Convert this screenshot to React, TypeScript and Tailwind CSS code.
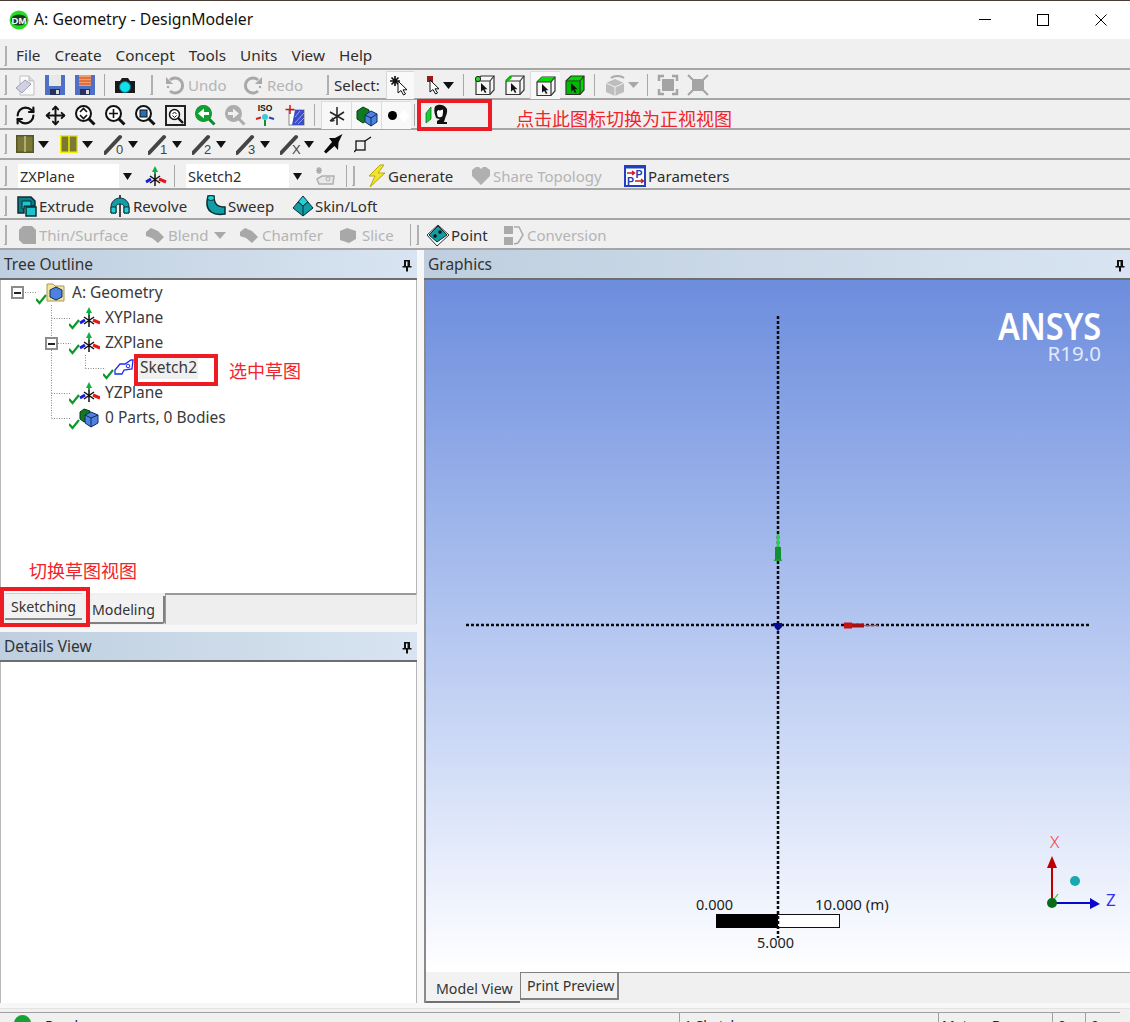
import React from "react";
import { Move, RefreshCw } from "lucide-react";

const Svg = ({ w = 24, h = 24, children }: { w?: number; h?: number; children?: React.ReactNode }) => (
  <svg width={w} height={h} viewBox={`0 0 ${w} ${h}`} className="shrink-0 block">{children}</svg>
);

const Grip = ({ cls = "" }: { cls?: string }) => (
  <div className={`w-[3px] h-[20px] shrink-0 border-r-2 border-b border-[#b0b0b0] ${cls}`} />
);
const Sep = ({ cls = "" }: { cls?: string }) => <div className={`w-px h-[22px] shrink-0 bg-[#a8a8a8] ${cls}`} />;
const Cell = ({ children, pressed = false }: { children?: React.ReactNode; pressed?: boolean }) => (
  <div className={`w-[30px] h-[28px] shrink-0 flex items-center justify-center ${pressed ? "bg-[#f8f8f8] border-t border-l border-[#dcdcdc]" : ""}`}>{children}</div>
);
const Row = ({ children, cls = "pt-[2px]" }: { children?: React.ReactNode; cls?: string }) => (
  <div className={`h-[30px] flex items-center pl-[4px] border-b-2 border-[#a6a6a6] bg-[#f0f0f0] whitespace-nowrap ${cls}`}>{children}</div>
);
const T = ({ cls, off = false, children }: { cls: string; off?: boolean; children?: React.ReactNode }) => (
  <span className={`shrink-0 text-[15px] ${off ? "text-[#b4b4b4]" : "text-[#2e2e2e]"} ${cls}`}>{children}</span>
);
const Arrow = ({ gray = false, w = 11 }: { gray?: boolean; w?: number }) => (
  <Svg w={w} h={7}><path d={`M0 0H${w}L${w / 2} 7Z`} fill={gray ? "#a8a8a8" : "#111"} /></Svg>
);

const Floppy = ({ label = false }: { label?: boolean }) => (
  <Svg>
    <rect x="2" y="2" width="20" height="20" fill="#4f70c4" />
    <rect x="6" y="2" width="12" height="11" fill={label ? "#f0a060" : "#e8e8e8"} />
    {label && <path d="M6 5H18M6 8H18M6 11H18" stroke="#d04030" strokeWidth="1" />}
    <rect x="7" y="16" width="10" height="6" fill="#26305c" />
    <rect x="13" y="17" width="3" height="4" fill="#d8d8d8" />
  </Svg>
);
const NewDoc = () => (
  <Svg>
    <path d="M7 3H16L21 8V22H7Z" fill="#fafafa" stroke="#c0c0c0" />
    <path d="M16 3V8H21" fill="#ddd" stroke="#bbb" />
    <path d="M3 15L12 7L18 11L9 20Z" fill="#cfd0e4" stroke="#a0a0b8" />
  </Svg>
);
const Camera = () => (
  <Svg>
    <path d="M2 8H7L9 5H15L17 8H22V20H2Z" fill="#1a1a1a" />
    <circle cx="12" cy="14" r="5.5" fill="#10e0ee" stroke="#0a6c78" />
  </Svg>
);
const Undo = ({ flip = false }: { flip?: boolean }) => (
  <Svg>
    <g transform={flip ? "translate(24 0) scale(-1 1)" : undefined}>
      <path d="M7 7A7.5 7.5 0 1 1 7 18" fill="none" stroke="#a8a8a8" strokeWidth="3" />
      <path d="M3 4V11H10Z" fill="#a8a8a8" />
      <circle cx="5" cy="14" r="1.2" fill="#a8a8a8" />
    </g>
  </Svg>
);
const Cursor = ({ x = 0, y = 0, white = false, s = 1 }: { x?: number; y?: number; white?: boolean; s?: number }) => (
  <path transform={`translate(${x} ${y}) scale(${s})`} d="M0 0V12L3 9.5L5.5 14L7.5 13L5 8.8H9Z" fill={white ? "#fff" : "#111"} stroke={white ? "#111" : "none"} strokeWidth="1" />
);
const StarCursor = () => (
  <Svg w={26}>
    <path d="M7 2V12M2 7H12M3.5 3.5L10.5 10.5M10.5 3.5L3.5 10.5" stroke="#111" strokeWidth="1.7" />
    <Cursor x={10} y={7} white />
  </Svg>
);
const RedCursor = () => (
  <Svg w={14}>
    <rect x="0" y="3" width="6" height="6" fill="#a01818" />
    <Cursor x={3} y={7} white />
  </Svg>
);
const Cube = ({ kind }: { kind: "dot" | "edge" | "face" | "solid" }) => (
  <Svg w={22} h={22}>
    <path d="M2 7L7 2H20V16L16 20.5H2Z" fill={kind === "solid" ? "#00d800" : "#f6f6f6"} stroke="#333" strokeWidth="1.2" />
    {kind === "face" && <path d="M2 7L7 2H20L16 7Z" fill="#00e000" />}
    {kind === "solid" && <rect x="3" y="8" width="12" height="12" fill="#00b800" />}
    <path d="M2 7H16V20.5M16 7L20 2" fill="none" stroke="#333" strokeWidth="1.2" />
    {kind === "edge" && <path d="M2.5 7L7 2.5" stroke="#00c000" strokeWidth="3" />}
    {kind === "dot" && <circle cx="4" cy="5" r="2.6" fill="#20e020" stroke="#222" />}
    <Cursor x={7} y={9} s={0.72} />
  </Svg>
);
const GrayRotCube = () => (
  <Svg w={36}>
    <path d="M3 10L12 6L21 10V19L12 23L3 19Z" fill="#bdbdbd" />
    <path d="M3 10L12 14L21 10M12 14V23" stroke="#f0f0f0" fill="none" />
    <path d="M8 5A8 5 0 0 1 21 5" fill="none" stroke="#aaa" strokeWidth="2" />
    <path d="M25 9H36L30.5 15Z" fill="#a8a8a8" />
  </Svg>
);
const GrayBox = ({ inward = false }: { inward?: boolean }) => (
  <Svg>
    <rect x="6" y="6" width="12" height="12" fill="#a4a4a4" />
    {inward ? (
      <path d="M2 2L8 8M22 2L16 8M2 22L8 16M22 22L16 16" stroke="#a4a4a4" strokeWidth="2" />
    ) : (
      <path d="M3 8V3H8M16 3H21V8M3 16V21H8M16 21H21V16" fill="none" stroke="#a4a4a4" strokeWidth="2.5" />
    )}
  </Svg>
);
const Mag = ({ children, color = "#111" }: { children?: React.ReactNode; color?: string }) => (
  <Svg w={22} h={22}>
    <circle cx="9.5" cy="9.5" r="7.5" fill="#fff" stroke={color} strokeWidth="2" />
    <path d="M15 15L20.5 20.5" stroke={color} strokeWidth="3" />
    {children}
  </Svg>
);
const Iso = () => (
  <Svg>
    <text x="12" y="8" textAnchor="middle" fontSize="8.5" fontWeight="700" fill="#111" fontFamily="Liberation Sans, sans-serif">ISO</text>
    <circle cx="12" cy="14" r="3" fill="#40c8d8" />
    <path d="M3 16L8 14.5" stroke="#d02020" strokeWidth="2" />
    <path d="M16 14.5L21 16" stroke="#2040d0" strokeWidth="2" />
    <path d="M12 17V23" stroke="#109030" strokeWidth="2" />
  </Svg>
);
const LookAt = () => (
  <Svg>
    <rect x="6" y="7" width="15" height="15" fill="#fff" stroke="#888" />
    <path d="M12 7H21V22H9Z" fill="#3c4cc8" />
    <path d="M12 20L21 10M15 21L21 15M12 14L17 8" stroke="#98a4e8" />
    <path d="M7 2V11M2.5 6.5H11.5" stroke="#d01818" strokeWidth="1.5" />
  </Svg>
);
const MiniBlock = () => (
  <Svg>
    <path d="M2 7L8 3L14 6V15L8 19L2 15Z" fill="#107a20" stroke="#0a3a10" />
    <path d="M10 11L16 7L22 10V18L16 22L10 18Z" fill="#4f82e0" stroke="#102a60" />
    <path d="M10 11L16 14L22 10M16 14V22" fill="none" stroke="#102a60" />
  </Svg>
);
const Triad = ({ x = 0, y = 0 }: { x?: number; y?: number }) => (
  <g transform={`translate(${x} ${y})`}>
    <path d="M9 6V20M4 10L14 17M14 10L4 17" stroke="#111" strokeWidth="1.5" />
    <path d="M9 0L6 6H12Z" fill="#10b040" />
    <path d="M9 2V8" stroke="#10b040" strokeWidth="2" />
    <path d="M13 13L20 16" stroke="#e01818" strokeWidth="3" />
    <path d="M5 13L0 16" stroke="#1818e0" strokeWidth="3" />
  </g>
);
const Pane = ({ yellow = false }: { yellow?: boolean }) => (
  <Svg w={18} h={18}>
    <rect x="0.75" y="0.75" width="16.5" height="16.5" fill="#7a7834" stroke={yellow ? "#f0f000" : "#55552a"} strokeWidth="1.5" />
    <path d="M9 1V17" stroke={yellow ? "#f0f000" : "#c0c090"} strokeWidth="1.5" />
  </Svg>
);
const Slant = ({ n }: { n: string }) => (
  <Svg h={26}>
    <path d="M1 22L16 6" stroke="#444" strokeWidth="4" strokeLinecap="round" />
    <text x="12" y="23" fontSize="13" fill="#444" fontFamily="Liberation Sans, sans-serif">{n}</text>
  </Svg>
);
const Plane = () => (
  <Svg w={20} h={22}>
    <path d="M19.5 1L12 5L6 5L9 9L1 18.5L3 20.5L11.5 13L15 17L15.5 9.5Z" fill="#0a0a0a" />
  </Svg>
);
const SmallSq = () => (
  <Svg w={18} h={18}>
    <rect x="2" y="6" width="9" height="9" fill="none" stroke="#111" strokeWidth="1.3" />
    <path d="M11 6L17 2M2 15L0 17" stroke="#111" strokeWidth="1.3" />
  </Svg>
);
const SketchGray = () => (
  <Svg>
    <path d="M4 15L9 12H21L20 20H6Z" fill="#e8e8e8" stroke="#b0b0b0" strokeWidth="1.5" />
    <circle cx="15" cy="15" r="2" fill="none" stroke="#b0b0b0" />
    <path d="M6 3V10M3 6.5H9M4 4L8 9M8 4L4 9" stroke="#aaa" strokeWidth="1.3" />
  </Svg>
);
const Bolt = () => (
  <Svg w={22}>
    <path d="M14 1L3 12H9L4 23L19 9H12L18 1Z" fill="#f2e428" stroke="#b8a810" />
  </Svg>
);
const Heart = () => (
  <Svg w={22}>
    <path d="M11 21L2 12V6L6 3H9L11 5L13 3H16L20 6V12Z" fill="#b0b0b0" />
  </Svg>
);
const Param = () => (
  <Svg w={22}>
    <rect x="1" y="2" width="20" height="20" fill="#fff" stroke="#2040c0" strokeWidth="2" />
    <path d="M1 3H21" stroke="#2040c0" strokeWidth="3" />
    <text x="11.5" y="13.5" fontSize="10.5" fontWeight="700" fill="#2040c0" fontFamily="Liberation Sans, sans-serif">P</text>
    <text x="3" y="20.5" fontSize="10.5" fontWeight="700" fill="#2040c0" fontFamily="Liberation Sans, sans-serif">P</text>
    <path d="M3 9H10M8 7L10.5 9L8 11M11 17H19M17 15L19.5 17L17 19" fill="none" stroke="#c02020" strokeWidth="1.4" />
  </Svg>
);
const teal = "#129ca4";
const Extrude = () => (
  <Svg>
    <path d="M3 3H16L20 7V12H9V19H3Z" fill="#0e7c84" stroke="#063034" strokeWidth="1.5" />
    <path d="M7 7H16V12H9V15H7Z" fill="#1dc4cc" stroke="#063034" />
    <rect x="11" y="13" width="10" height="9" fill="#1dc4cc" stroke="#063034" strokeWidth="1.5" />
  </Svg>
);
const Revolve = () => (
  <Svg>
    <path d="M12 1V23" stroke="#111" strokeWidth="1.5" />
    <path d="M3 13C3 7 8 4 12 4C16 4 21 7 21 13V19H16V13C16 11 14 10 12 10C10 10 8 11 8 13V19H3Z" fill={teal} stroke="#063034" />
    <path d="M3 13H8V19H3ZM16 13H21V19H16Z" fill="#24d0d8" stroke="#063034" />
  </Svg>
);
const Sweep = () => (
  <Svg>
    <path d="M5 2L11 2C11 10 14 13 22 13V20C10 22 3 17 4 7Z" fill={teal} stroke="#063034" strokeWidth="1.5" />
    <ellipse cx="8" cy="4" rx="3.5" ry="2.5" fill="#24d0d8" stroke="#063034" />
  </Svg>
);
const Skin = () => (
  <Svg>
    <path d="M12 2L17 8L12 12L7 8Z" fill="#24d0d8" stroke="#063034" />
    <path d="M7 8L12 12L17 8L22 14L12 22L2 14Z" fill={teal} stroke="#063034" />
    <path d="M12 12V22" stroke="#063034" />
  </Svg>
);
const GrayThin = () => (
  <Svg><path d="M4 7L8 3H17L21 7V21H8L4 17Z" fill="#a8a8a8" /></Svg>
);
const GrayTag = () => (
  <Svg><path d="M3 9L8 5L15 8L21 14L15 20L9 15L3 13Z" fill="#a8a8a8" /></Svg>
);
const GrayHex = () => (
  <Svg><path d="M4 8L11 5L20 8V16L13 20L4 17Z" fill="#a8a8a8" /></Svg>
);
const PointIcon = () => (
  <Svg>
    <path d="M12 2L23 12L11 23L1 12Z" fill="#fff" stroke="#333" />
    <path d="M12 3L21 12L11 19L3 12Z" fill={teal} stroke="#063034" />
    <circle cx="9" cy="13" r="1.8" fill="#111" />
    <circle cx="14" cy="9" r="1.8" fill="#111" />
  </Svg>
);
const ConvIcon = () => (
  <Svg>
    <rect x="2" y="3" width="9" height="8" fill="#aaa" />
    <rect x="2" y="14" width="9" height="8" fill="#aaa" />
    <path d="M12 4L17 4L21 12L16 20L12 21" fill="none" stroke="#aaa" strokeWidth="1.5" />
  </Svg>
);
const Profile = () => (
  <Svg>
    <path d="M2 10L7 4V16L2 20Z" fill="#18d030" stroke="#0a6018" strokeWidth="0.7" />
    <path d="M11 3.5C14 0.5 21 1.5 23 6C23.5 9 22.5 12 21.5 14L20 19H23V21H13V18L16 16C13 16 11.5 15 11.5 13C10 10 10 6 11 3.5Z" fill="#111" />
    <path d="M14 7C16 8 18 7 19 6.5V9L18.5 13C17 15 14 14.5 13.5 13L12.8 9Z" fill="#fff" />
  </Svg>
);
const Combo = ({ w, label }: { w: string; label: string }) => (
  <div className={`${w} ml-[11px] h-[24px] shrink-0 flex bg-white`}>
    <span className="flex-1 pl-[2px] text-[14.5px] text-[#2e2e2e] leading-[24px]">{label}</span>
    <span className="w-[17px] bg-[#f0f0f0] flex items-center justify-center"><Arrow w={9} /></span>
  </div>
);

const Pin = () => (
  <svg width="10" height="13" viewBox="0 0 10 13" className="block shrink-0">
    <path d="M2 1H8V7H9.5V8.5H6V12.5H4V8.5H0.5V7H2Z" fill="#111" />
    <path d="M4 2.5H5.5V7H4Z" fill="#e8eef4" />
  </svg>
);
const PanelHeader = ({ title }: { title: string }) => (
  <div className="h-[30px] shrink-0 flex items-center justify-between pl-[4px] pr-[5px] pt-[2px] bg-gradient-to-r from-[#bfcfdf] to-[#d8e4f1] border-b-2 border-[#6e6e6e]">
    <span className="text-[15.5px] text-[#333]">{title}</span>
    <Pin />
  </div>
);

const Check = () => <path d="M0 5L3.5 9L10 1" transform="translate(0 13)" fill="none" stroke="#0e9a2a" strokeWidth="2.2" />;
const TreeRow = ({ pl, icon, label, selected = false }: { pl: string; icon: React.ReactNode; label: string; selected?: boolean }) => (
  <div className={`h-[25px] flex items-center ${pl}`}>
    <Svg w={31} h={24}><Check />{icon}</Svg>
    <span className={`ml-[5px] text-[15.5px] text-[#3a3a3a] ${selected ? "bg-[#f0f0f0] px-[1px]" : ""}`}>{label}</span>
  </div>
);
const Expander = ({ cls }: { cls: string }) => (
  <div className={`absolute w-[13px] h-[13px] bg-white border-2 border-[#8c8c8c] flex items-center justify-center ${cls}`}>
    <div className="w-[7px] h-[2px] bg-[#222]" />
  </div>
);
const RedBox = ({ cls }: { cls: string }) => <div className={`absolute border-[4px] border-[#ed1c24] pointer-events-none ${cls}`} />;
const Note = ({ cls, children }: { cls: string; children: React.ReactNode }) => (
  <span className={`text-[18px] leading-[24px] text-[#f0242c] [font-family:'Noto_Sans_CJK_SC',sans-serif] ${cls}`}>{children}</span>
);

export default function App() {
  return (
    <div className="relative w-[1130px] h-[1022px] overflow-hidden bg-[#f7f7f7] flex flex-col [font-family:'Noto_Sans',sans-serif]">
      <div className="h-px bg-[#4a3c34] shrink-0" />
      {/* title bar */}
      <div className="h-[38px] shrink-0 bg-white flex items-center pl-[9px]">
        <svg width="20" height="20" viewBox="0 0 20 20" className="block shrink-0">
          <circle cx="10" cy="10" r="9.5" fill="#22dd22" />
          <ellipse cx="10" cy="10" rx="8" ry="5.5" fill="#1a3a1a" />
          <text x="10" y="13.5" textAnchor="middle" fontSize="9.5" fontWeight="700" fill="#fff" fontFamily="Liberation Sans, sans-serif">DM</text>
        </svg>
        <span className="ml-[5px] text-[15.8px] text-[#111]">A: Geometry - DesignModeler</span>
        <div className="ml-auto flex">
          <div className="w-[58px] h-[38px] flex items-center justify-center">
            <div className="w-[12px] h-px bg-black mb-[2px]" />
          </div>
          <div className="w-[58px] h-[38px] flex items-center justify-center">
            <div className="w-[12px] h-[12px] border border-black" />
          </div>
          <div className="w-[58px] h-[38px] flex items-center justify-center">
            <svg width="12" height="12" viewBox="0 0 12 12" className="block"><path d="M0.5 0.5L11.5 11.5M11.5 0.5L0.5 11.5" stroke="#000" /></svg>
          </div>
        </div>
      </div>
      {/* menu */}
      <Row cls="h-[31px] pt-[4px]">
        <Grip />
        <div className="ml-[9px] flex gap-[14px] text-[15.3px] text-[#2e2e2e]">
          <span>File</span><span>Create</span><span>Concept</span><span>Tools</span><span>Units</span><span>View</span><span>Help</span>
        </div>
      </Row>
      {/* toolbar 1 */}
      <Row>
        <Grip />
        <div className="ml-[3px] flex shrink-0"><Cell><NewDoc /></Cell><Cell><Floppy /></Cell><Cell><Floppy label /></Cell></div>
        <Sep cls="ml-[4px]" />
        <div className="ml-[5px]"><Cell><Camera /></Cell></div>
        <Grip cls="ml-[10px]" />
        <div className="ml-[10px]"><Undo /></div>
        <T off cls="ml-[1px] w-[40px]">Undo</T>
        <div className="ml-[13px]"><Undo flip /></div>
        <T off cls="ml-[2px] w-[38px]">Redo</T>
        <Grip cls="ml-[21px]" />
        <T cls="ml-[5px] w-[47px]">Select:</T>
        <div className="ml-[5px] w-[28px] h-[28px] flex items-center justify-center bg-[#f9f9f9] border-t border-l border-[#d8d8d8]"><StarCursor /></div>
        <div className="ml-[13px] w-[28px] flex items-center gap-[2px]"><RedCursor /><Arrow /></div>
        <Sep cls="ml-[8px]" />
        <div className="ml-[6px] flex">
          <Cell><Cube kind="dot" /></Cell><Cell><Cube kind="edge" /></Cell><Cell pressed><Cube kind="face" /></Cell><Cell><Cube kind="solid" /></Cell>
        </div>
        <Sep cls="ml-[4px]" />
        <div className="ml-[8px]"><GrayRotCube /></div>
        <Sep cls="ml-[8px]" />
        <div className="ml-[5px] flex"><Cell><GrayBox /></Cell><Cell><GrayBox inward /></Cell></div>
      </Row>
      {/* toolbar 2 */}
      <Row>
        <Grip />
        <div className="ml-[3px] flex shrink-0">
          <Cell><RefreshCw size={21} strokeWidth={2.5} color="#111" /></Cell>
          <Cell><Move size={21} strokeWidth={2.2} color="#111" /></Cell>
          <Cell><Mag><path d="M6 8L9.5 4.5L13 8M6 11L9.5 14.5L13 11" fill="none" stroke="#111" strokeWidth="1.6" /></Mag></Cell>
          <Cell><Mag><path d="M9.5 5V14M5 9.5H14" stroke="#111" strokeWidth="1.6" /></Mag></Cell>
          <Cell><Mag><rect x="6" y="6" width="7" height="7" fill="#2c6fb0" stroke="#111" /></Mag></Cell>
          <Cell>
            <div className="relative w-[21px] h-[21px] border-2 border-[#222] flex items-center justify-center">
              <Svg w={17} h={17}>
                <circle cx="7.5" cy="7.5" r="5" fill="#fff" stroke="#111" strokeWidth="1.5" />
                <path d="M11 11L16 16" stroke="#111" strokeWidth="2.4" />
                <path d="M5.5 7L7.5 5L9.5 7M5.5 8.5L7.5 10.5L9.5 8.5" fill="none" stroke="#111" />
              </Svg>
            </div>
          </Cell>
          <Cell><Mag color="#0c8a2c"><circle cx="9.5" cy="9.5" r="8" fill="#10a030" /><path d="M4 9.5L10 4.5V8H15V11H10V14.5Z" fill="#fff" /></Mag></Cell>
          <Cell><Mag color="#adadad"><circle cx="9.5" cy="9.5" r="8" fill="#adadad" /><path d="M15 9.5L9 4.5V8H4V11H9V14.5Z" fill="#f0f0f0" /></Mag></Cell>
          <Cell><Iso /></Cell>
          <Cell><LookAt /></Cell>
        </div>
        <Sep cls="ml-[4px]" />
        <div className="ml-[6px] flex">
          <Cell pressed><Svg w={20} h={20}><path d="M10 1V19M3 6L17 14M17 6L3 15" stroke="#222" strokeWidth="1.5" /><path d="M5 11L8 15L4 16Z" fill="#333" /></Svg></Cell>
          <Cell pressed><MiniBlock /></Cell>
        </div>
        <div className="w-[30px] h-[28px] shrink-0 flex items-center pl-[6px] gap-[3px] bg-[#f8f8f8] border-t border-l border-[#dcdcdc]">
          <div className="w-[9px] h-[9px] rounded-full bg-black" />
          <div className="w-[8px] h-[8px] rotate-45 bg-white" />
        </div>
        <Sep cls="ml-[3px]" />
        <div className="ml-[9px]"><Profile /></div>
        <Note cls="ml-[68px] mt-[6px]">点击此图标切换为正视视图</Note>
      </Row>
      {/* toolbar 3 */}
      <Row cls="pt-0">
        <Grip />
        <div className="ml-[9px]"><Pane /></div>
        <div className="ml-[4px]"><Arrow /></div>
        <div className="ml-[11px]"><Pane yellow /></div>
        <div className="ml-[4px]"><Arrow /></div>
        <div className="ml-[11px]"><Slant n="0" /></div>
        <Arrow w={10} />
        <div className="ml-[10px]"><Slant n="1" /></div>
        <Arrow w={10} />
        <div className="ml-[10px]"><Slant n="2" /></div>
        <Arrow w={10} />
        <div className="ml-[10px]"><Slant n="3" /></div>
        <Arrow w={10} />
        <div className="ml-[10px]"><Slant n="X" /></div>
        <Arrow w={10} />
        <div className="ml-[9px]"><Plane /></div>
        <div className="ml-[11px]"><SmallSq /></div>
      </Row>
      {/* toolbar 4 */}
      <Row cls="pt-[4px]">
        <Grip />
        <Combo w="w-[118px]" label="ZXPlane" />
        <div className="ml-[7px]"><Svg><Triad x={3} y={2} /></Svg></div>
        <Sep cls="ml-[7px]" />
        <Combo w="w-[120px]" label="Sketch2" />
        <div className="ml-[7px]"><SketchGray /></div>
        <Sep cls="ml-[9px]" />
        <Grip cls="ml-[5px]" />
        <div className="ml-[11px]"><Bolt /></div>
        <T cls="w-[66px]">Generate</T>
        <div className="ml-[16px]"><Heart /></div>
        <T off cls="ml-[1px] w-[116px]">Share Topology</T>
        <div className="ml-[15px]"><Param /></div>
        <T cls="ml-[2px] w-[82px]">Parameters</T>
      </Row>
      {/* toolbar 5 */}
      <Row cls="pt-[4px]">
        <Grip />
        <div className="ml-[8px]"><Extrude /></div>
        <T cls="w-[55px]">Extrude</T>
        <div className="ml-[14px]"><Revolve /></div>
        <T cls="ml-[1px] w-[56px]">Revolve</T>
        <div className="ml-[14px]"><Sweep /></div>
        <T cls="ml-[1px] w-[47px]">Sweep</T>
        <div className="ml-[16px]"><Skin /></div>
        <T cls="w-[64px]">Skin/Loft</T>
      </Row>
      {/* toolbar 6 */}
      <Row cls="border-b-0 pt-[2px]">
        <Grip />
        <div className="ml-[8px]"><GrayThin /></div>
        <T off cls="w-[90px]">Thin/Surface</T>
        <div className="ml-[14px]"><GrayTag /></div>
        <T off cls="ml-[1px] w-[41px]">Blend</T>
        <div className="ml-[5px]"><Arrow gray w={12} /></div>
        <div className="ml-[11px]"><GrayTag /></div>
        <T off cls="ml-[1px] w-[61px]">Chamfer</T>
        <div className="ml-[13px]"><GrayHex /></div>
        <T off cls="ml-[2px] w-[32px]">Slice</T>
        <Sep cls="ml-[16px]" />
        <Grip cls="ml-[5px]" />
        <div className="ml-[7px]"><PointIcon /></div>
        <T cls="ml-[1px] w-[37px]">Point</T>
        <div className="ml-[14px]"><ConvIcon /></div>
        <T off cls="ml-[1px] w-[81px]">Conversion</T>
      </Row>

      {/* main */}
      <div className="h-[753px] shrink-0 flex">
        <div className="w-[424px] shrink-0 pr-[7px] flex flex-col">
          <PanelHeader title="Tree Outline" />
          <div className="relative h-[313px] shrink-0 bg-white border-r border-l border-[#b8b8b8]">
            <svg className="absolute left-0 top-0 block" width="120" height="150" viewBox="0 280 120 150">
              <path d="M24 292.5H35M50.5 305V418M50.5 318.5H70M57 343.5H70M50.5 393.5H70M50.5 418.5H70M84.5 355V368.5M84.5 368.5H103" fill="none" stroke="#888" strokeDasharray="1 1.5" />
            </svg>
            <div className="relative">
              <TreeRow pl="pl-[35px]" label="A: Geometry" icon={
                <g><path d="M11 3H17L19 5H28V20H11Z" fill="#f2e3a0" stroke="#a89c50" /><path d="M14 9L20 6L26 9V16L20 19L14 16Z" fill="#4f82e0" stroke="#102a60" /></g>
              } />
              <TreeRow pl="pl-[68px]" label="XYPlane" icon={<Triad x={11} y={1} />} />
              <TreeRow pl="pl-[68px]" label="ZXPlane" icon={<Triad x={11} y={1} />} />
              <TreeRow pl="pl-[102px]" label="Sketch2" selected icon={
                <g><path d="M12 14L17 8L22 8L28 4L30 4L29 13L21 14L19 18L12 18Z" fill="#fff" stroke="#1f2ef0" strokeWidth="1.3" /><circle cx="25" cy="10" r="1.8" fill="none" stroke="#1f2ef0" /></g>
              } />
              <TreeRow pl="pl-[68px]" label="YZPlane" icon={<Triad x={11} y={1} />} />
              <TreeRow pl="pl-[68px]" label="0 Parts, 0 Bodies" icon={
                <g><path d="M11 6L15 3L21 5V13L15 16L11 13Z" fill="#107a20" stroke="#0a3a10" /><path d="M16 9L22 6L29 9V17L22 21L16 17Z" fill="#4f82e0" stroke="#102a60" /><path d="M16 9L22 12L29 9M22 12V21" fill="none" stroke="#102a60" /></g>
              } />
            </div>
            <Expander cls="left-[10px] top-[6px]" />
            <Expander cls="left-[44px] top-[57px]" />
            <Note cls="absolute left-[28px] top-[278px]">切换草图视图</Note>
          </div>
          <div className="h-[32px] shrink-0 flex items-start bg-[#f0f0f0] border-l border-[#b8b8b8]">
            <div className="ml-[4px] w-[77px] h-[27px] shrink-0 bg-[#f2f2f2] border-t border-[#cfcfcf] border-b-2 border-b-[#8a8a8a] text-center text-[14.2px] leading-[26px] text-[#333]">Sketching</div>
            <div className="ml-[8px] mt-[3px] w-[75px] h-[28px] shrink-0 bg-[#f2f2f2] border-r-2 border-b-2 border-[#808080] rounded-br-[3px] pl-[2px] text-[14.2px] leading-[28px] text-[#333]">Modeling</div>
            <div className="flex-1 h-[31px] bg-[#eeeeee] border-t-2 border-l border-r border-[#9a9a9a] border-r-[#d8d8d8] border-l-[#9a9a9a]" />
          </div>
          <div className="h-[7px] shrink-0 bg-[#f7f7f7]" />
          <PanelHeader title="Details View" />
          <div className="flex-1 bg-white border-l border-r border-[#b8b8b8]" />
        </div>
        <div className="flex-1 flex flex-col">
          <PanelHeader title="Graphics" />
          <div className="relative h-[692px] shrink-0 border-l-2 border-[#8a8a8a] bg-gradient-to-b from-[#6d8ddd] to-[#ffffff] overflow-hidden">
            <svg className="absolute inset-0 block" width="704" height="692" viewBox="426 280 704 692">
              <rect x="716.5" y="914.5" width="123" height="13" fill="#fff" stroke="#111" />
              <rect x="716" y="914" width="62" height="14" fill="#000" />
              <path d="M778 316V938M466 625H1090" stroke="#0a0a0a" strokeWidth="2.5" strokeDasharray="3 2" />
              <path d="M778 534V547" stroke="#2ed050" strokeWidth="2.5" />
              <path d="M775 547H781V560H775Z" fill="#109030" />
              <path d="M774 559.5H782V561H774Z" fill="#20a040" />
              <path d="M773 623H782V627L778 631L775 628Z" fill="#0a0a90" />
              <path d="M844 622.5H852V628.5H844Z" fill="#c81010" />
              <path d="M852 623.5H864V627.5H852Z" fill="#a81010" />
              <path d="M864 625.5H878" stroke="#e83030" strokeWidth="1.3" />
              <path d="M1052 903V862" stroke="#c00000" strokeWidth="2" />
              <path d="M1047 868L1052 856L1057 868Z" fill="#c00000" />
              <path d="M1052 903H1090" stroke="#0808d0" strokeWidth="2" />
              <path d="M1090 898L1100 904L1090 909Z" fill="#0808d0" />
              <path d="M1052 902L1058 894" stroke="#20d040" strokeWidth="1.2" />
              <circle cx="1052" cy="903" r="5" fill="#0a6a1a" />
              <circle cx="1075" cy="881" r="5" fill="#18a8b0" />
            </svg>
            <span className="absolute right-[29px] top-[29px] text-[37px] leading-[34px] font-semibold text-white origin-right scale-x-[0.88]">ANSYS</span>
            <span className="absolute right-[29px] top-[63px] text-[20.5px] leading-[20px] text-[#e2e9fa]">R19.0</span>
            <span className="absolute left-[270px] top-[614px] text-[14.5px] leading-[20px] text-[#222]">0.000</span>
            <span className="absolute left-[389px] top-[614px] text-[15px] leading-[20px] text-[#222]">10.000 (m)</span>
            <span className="absolute left-[331px] top-[652px] text-[14.5px] leading-[20px] text-[#222]">5.000</span>
            <span className="absolute left-[624px] top-[552px] text-[17px] leading-[20px] font-light text-[#f04040]">X</span>
            <span className="absolute left-[680px] top-[610px] text-[17px] leading-[20px] text-[#3030f0]">Z</span>
          </div>
          <div className="h-[31px] shrink-0 flex items-start bg-[#f0f0f0] border-l-2 border-[#8a8a8a]">
            <div className="w-[94px] h-[31px] shrink-0 bg-[#f2f2f2] border-b-2 border-[#707070] pl-[10px] text-[14.2px] leading-[34px] text-[#333]">Model View</div>
            <div className="w-[99px] h-[28px] shrink-0 bg-[#f2f2f2] border-t border-l border-r-2 border-b-2 border-[#808080] pl-[6px] text-[14.2px] leading-[25px] text-[#333]">Print Preview</div>
            <div className="flex-1 border-t border-[#9a9a9a]" />
          </div>
        </div>
      </div>

      {/* status bar */}
      <div className="mt-[5px] h-[14px] shrink-0 bg-[#f0f0f0] flex pt-[3px] text-[14px] text-[#222] overflow-hidden border-t border-[#e4e4e4]">
        <div className="w-[680px] shrink-0 pl-[14px] flex items-start gap-[14px] border-r border-t border-[#a0a0a0]">
          <div className="w-[17px] h-[17px] mt-[2px] rounded-full bg-[#18a038]" />
          <span className="leading-[20px] mt-[3px]">Ready</span>
        </div>
        <div className="w-[259px] shrink-0 pl-[4px] border-r border-t border-[#a0a0a0] leading-[20px] pt-[3px]">1 Sketch</div>
        <div className="w-[114px] shrink-0 pl-[3px] border-r border-t border-[#a0a0a0] leading-[20px] pt-[3px]">Meters Degree</div>
        <div className="w-[33px] shrink-0 pl-[5px] border-r border-t border-[#a0a0a0] leading-[20px] pt-[3px]">0</div>
        <div className="w-[34px] shrink-0 pl-[5px] border-t border-[#a0a0a0] leading-[20px] pt-[3px]">0</div>
      </div>

      {/* annotations lying over the interface */}
      <RedBox cls="left-[417px] top-[99px] w-[75px] h-[32px]" />
      <RedBox cls="left-[134px] top-[354px] w-[84px] h-[32px]" />
      <RedBox cls="left-[0px] top-[587px] w-[90px] h-[40px]" />
      <Note cls="absolute left-[229px] top-[358px]">选中草图</Note>
    </div>
  );
}
